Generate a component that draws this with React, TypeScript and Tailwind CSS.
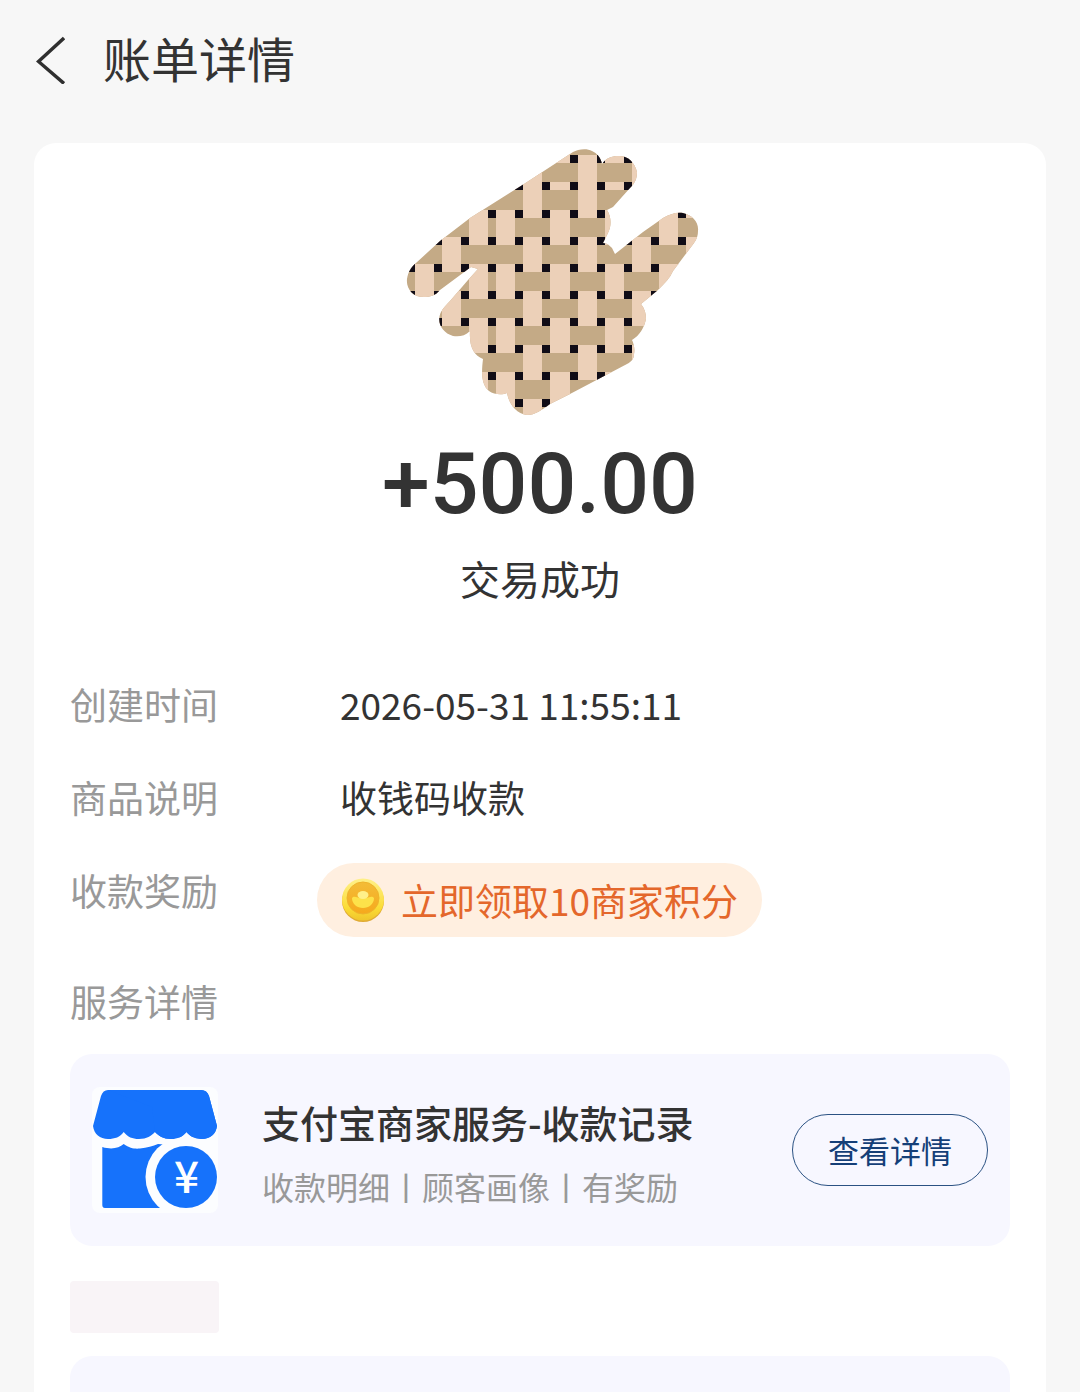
import type { ReactNode } from 'react'

// ─── Icons ────────────────────────────────────────────────────────────────────

function BackIcon() {
  return (
    <svg width="29" height="48" viewBox="0 0 29 48" fill="none" className="shrink-0" aria-hidden="true">
      <path d="M28 2L2.5 25.5L28 47.5" stroke="#2f2f2f" strokeWidth="3.4" />
    </svg>
  )
}

function CoinIcon() {
  return (
    <svg width="44" height="44" viewBox="0 0 44 44" className="shrink-0" aria-hidden="true">
      <defs>
        <linearGradient id="coin-rim" x1="0" y1="0" x2="0" y2="1">
          <stop offset="0" stopColor="#fff08a" />
          <stop offset="0.7" stopColor="#fbdc35" />
          <stop offset="1" stopColor="#f0c52c" />
        </linearGradient>
        <linearGradient id="coin-face" x1="0" y1="0" x2="0" y2="1">
          <stop offset="0" stopColor="#f3bc38" />
          <stop offset="1" stopColor="#f6a91c" />
        </linearGradient>
      </defs>
      <circle cx="22" cy="23" r="21" fill="#e0ab35" />
      <circle cx="22" cy="21.5" r="21" fill="url(#coin-rim)" />
      <circle cx="22" cy="20" r="16" fill="url(#coin-face)" stroke="#eeb32c" />
      <path d="M11 20C13 17 16 20 22 20C28 20 31 17 33 20C33 26 28 30 22 30C16 30 11 26 11 20Z" fill="#fde24a" />
      <ellipse cx="22" cy="17" rx="5.5" ry="4" fill="#fff08a" />
    </svg>
  )
}

function ShopIcon() {
  return (
    <svg width="126" height="126" viewBox="0 0 126 126" className="shrink-0 rounded-lg" aria-hidden="true">
      <rect width="126" height="126" fill="#fcfdff" />
      <path
        d="M16 3H109Q115 3 117 9L125 39C124 47 118 52 110 52C102 52 98 49 94.5 45C90 50 86 52 79 52C71 52 67 49 63 45C59 49 55 52 47 52C40 52 36 50 31.7 45C28 50 23 52 16 52C8 52 2 47 1 39L9 9Q11 3 16 3Z"
        fill="#1672fb"
      />
      <path
        d="M10.3 60C20 63 27 61 31.7 57C38 61.5 43 62 48 61.5C55 61 61 59 66 57L78 58V121H13Q10.3 121 10.3 118Z"
        fill="#1672fb"
      />
      <circle cx="94" cy="90" r="40.5" fill="#fcfdff" />
      <path
        d="M16 3H109Q115 3 117 9L125 39C124 47 118 52 110 52C102 52 98 49 94.5 45C90 50 86 52 79 52C71 52 67 49 63 45L60 20Z"
        fill="#1672fb"
      />
      <circle cx="94" cy="90" r="31" fill="#1672fb" />
      <text x="94.5" y="106" textAnchor="middle" fill="#fff" fontSize="44" fontWeight="500" fontFamily="Noto Sans CJK SC, sans-serif">
        ¥
      </text>
    </svg>
  )
}

// ─── Woven patch ──────────────────────────────────────────────────────────────

const PITCH = 27.1
const KNOT = 8
const COL0 = 406.9
const ROW0 = 128.2

const colX = (c: number) => Math.round(COL0 + c * PITCH)
const rowY = (r: number) => Math.round(ROW0 + r * PITCH)

// 1 = the vertical strip passes over the horizontal one
const WEAVE = [0, 1, 0, 0, 1, 0, 1, 0, 1, 0, 1]
const ROWS = [false, true, true, false, true, false, true, false, true, false, true]

function WovenPatch() {
  return (
    <svg width="340" height="295" viewBox="370 143 340 295" className="mx-auto block" aria-hidden="true">
      <defs>
        <clipPath id="patch">
          <path d="M550 167L573 152C578 149 587 148 592 151C597 153 601 158 602 164C606 158 612 156 618 156C627 155 635 162 637 172C637 179 635 183 630 188L613 207L607 210C611 216 612 225 608 233L603 243C607 243 610 246 612 248L615 254L643 232L663 218C670 214 676 212 683 213C692 215 699 222 698 231C698 235 697 239 694 243L673 271C670 278 665 283 658 290L641 304C645 309 646 314 646 319C644 328 640 335 632 340C634 344 635 350 634 354C634 359 631 362 627 364L570 394L550 404C542 410 535 415 527 415C516 414 509 404 507 393C503 395 494 395 489 391C482 385 481 375 483 359C474 355 469 347 470 331C465 336 459 337 453 336C442 333 436 322 441 312C443 308 447 304 450 301L468 280L478 269L471 267L440 290C435 296 430 297 424 297C413 297 406 289 407 279C408 272 411 267 416 263L440 241L470 218L524 184Z" />
        </clipPath>
      </defs>
      <g clipPath="url(#patch)">
        <rect x="400" y="143" width="310" height="280" fill="#c4aa86" />
        {ROWS.map((row, r) => {
          const y = rowY(r)
          return (
            <g key={r}>
              <rect x="400" y={y} width="310" height={KNOT} fill="#ecd0b8" />
              {WEAVE.map((v, c) => {
                const x = colX(c)
                const over = row ? v === 1 : v === 0
                return (
                  <g key={c}>
                    {over && (
                      <rect
                        x={x + KNOT}
                        y={y + KNOT}
                        width={colX(c + 1) - x - KNOT}
                        height={rowY(r + 1) - y - KNOT}
                        fill="#ecd0b8"
                      />
                    )}
                    <rect x={x} y={y} width={KNOT} height={KNOT} fill="#100c16" />
                  </g>
                )
              })}
            </g>
          )
        })}
      </g>
    </svg>
  )
}

// ─── Page ─────────────────────────────────────────────────────────────────────

function DetailRow({ label, children }: { label: string; children: ReactNode }) {
  return (
    <div className="flex items-start text-[37px] leading-[54px]">
      <dt className="w-[270px] shrink-0 text-[#999999]">{label}</dt>
      <dd className="text-[#333333]">{children}</dd>
    </div>
  )
}

export default function App() {
  return (
    <div className="flex min-h-screen flex-col bg-[#f7f7f7] font-['Noto_Sans_CJK_SC',sans-serif] text-[#333333]">
      <header className="mb-6 flex h-[119px] items-center gap-[38px] px-9">
        <button type="button" aria-label="返回">
          <BackIcon />
        </button>
        <h1 className="pb-1.5 text-[48px] leading-[72px]">账单详情</h1>
      </header>

      <main className="mx-[34px] flex flex-1 flex-col rounded-t-[22px] bg-white px-9">
        <WovenPatch />
        <p className="text-center font-[Roboto,sans-serif] text-[86px] leading-[92px] font-medium">+500.00</p>
        <p className="mt-[18px] text-center text-[40px] leading-[60px]">交易成功</p>

        <dl className="mt-[69px] flex flex-col gap-[39px]">
          <DetailRow label="创建时间">2026-05-31 11:55:11</DetailRow>
          <DetailRow label="商品说明">收钱码收款</DetailRow>
          <DetailRow label="收款奖励">
            <button
              type="button"
              className="-ml-[23px] flex h-[74px] items-center gap-4 rounded-full bg-[#ffefe0] px-6 text-[#e4672b]"
            >
              <CoinIcon />
              立即领取10商家积分
            </button>
          </DetailRow>
        </dl>

        <h2 className="mt-[37px] text-[37px] leading-[54px] text-[#999999]">服务详情</h2>
        <section className="mt-[26px] flex h-[192px] shrink-0 items-center rounded-[22px] bg-[#f7f7ff] px-[22px]">
          <ShopIcon />
          <div className="ml-11 flex-1 pt-2">
            <h3 className="text-[38px] leading-[64px] font-medium">支付宝商家服务-收款记录</h3>
            <p className="text-[32px] leading-[64px] text-[#999999]">收款明细丨顾客画像丨有奖励</p>
          </div>
          <button
            type="button"
            className="h-[72px] w-[196px] shrink-0 rounded-full border border-[#2b5283] text-[31px] text-[#153f78]"
          >
            查看详情
          </button>
        </section>

        <div className="mt-[35px] h-[52px] w-[149px] shrink-0 rounded bg-[#f9f4f7]" />
        <div className="mt-[23px] min-h-9 flex-1 rounded-t-[22px] bg-[#f7f7ff]" />
      </main>
    </div>
  )
}
